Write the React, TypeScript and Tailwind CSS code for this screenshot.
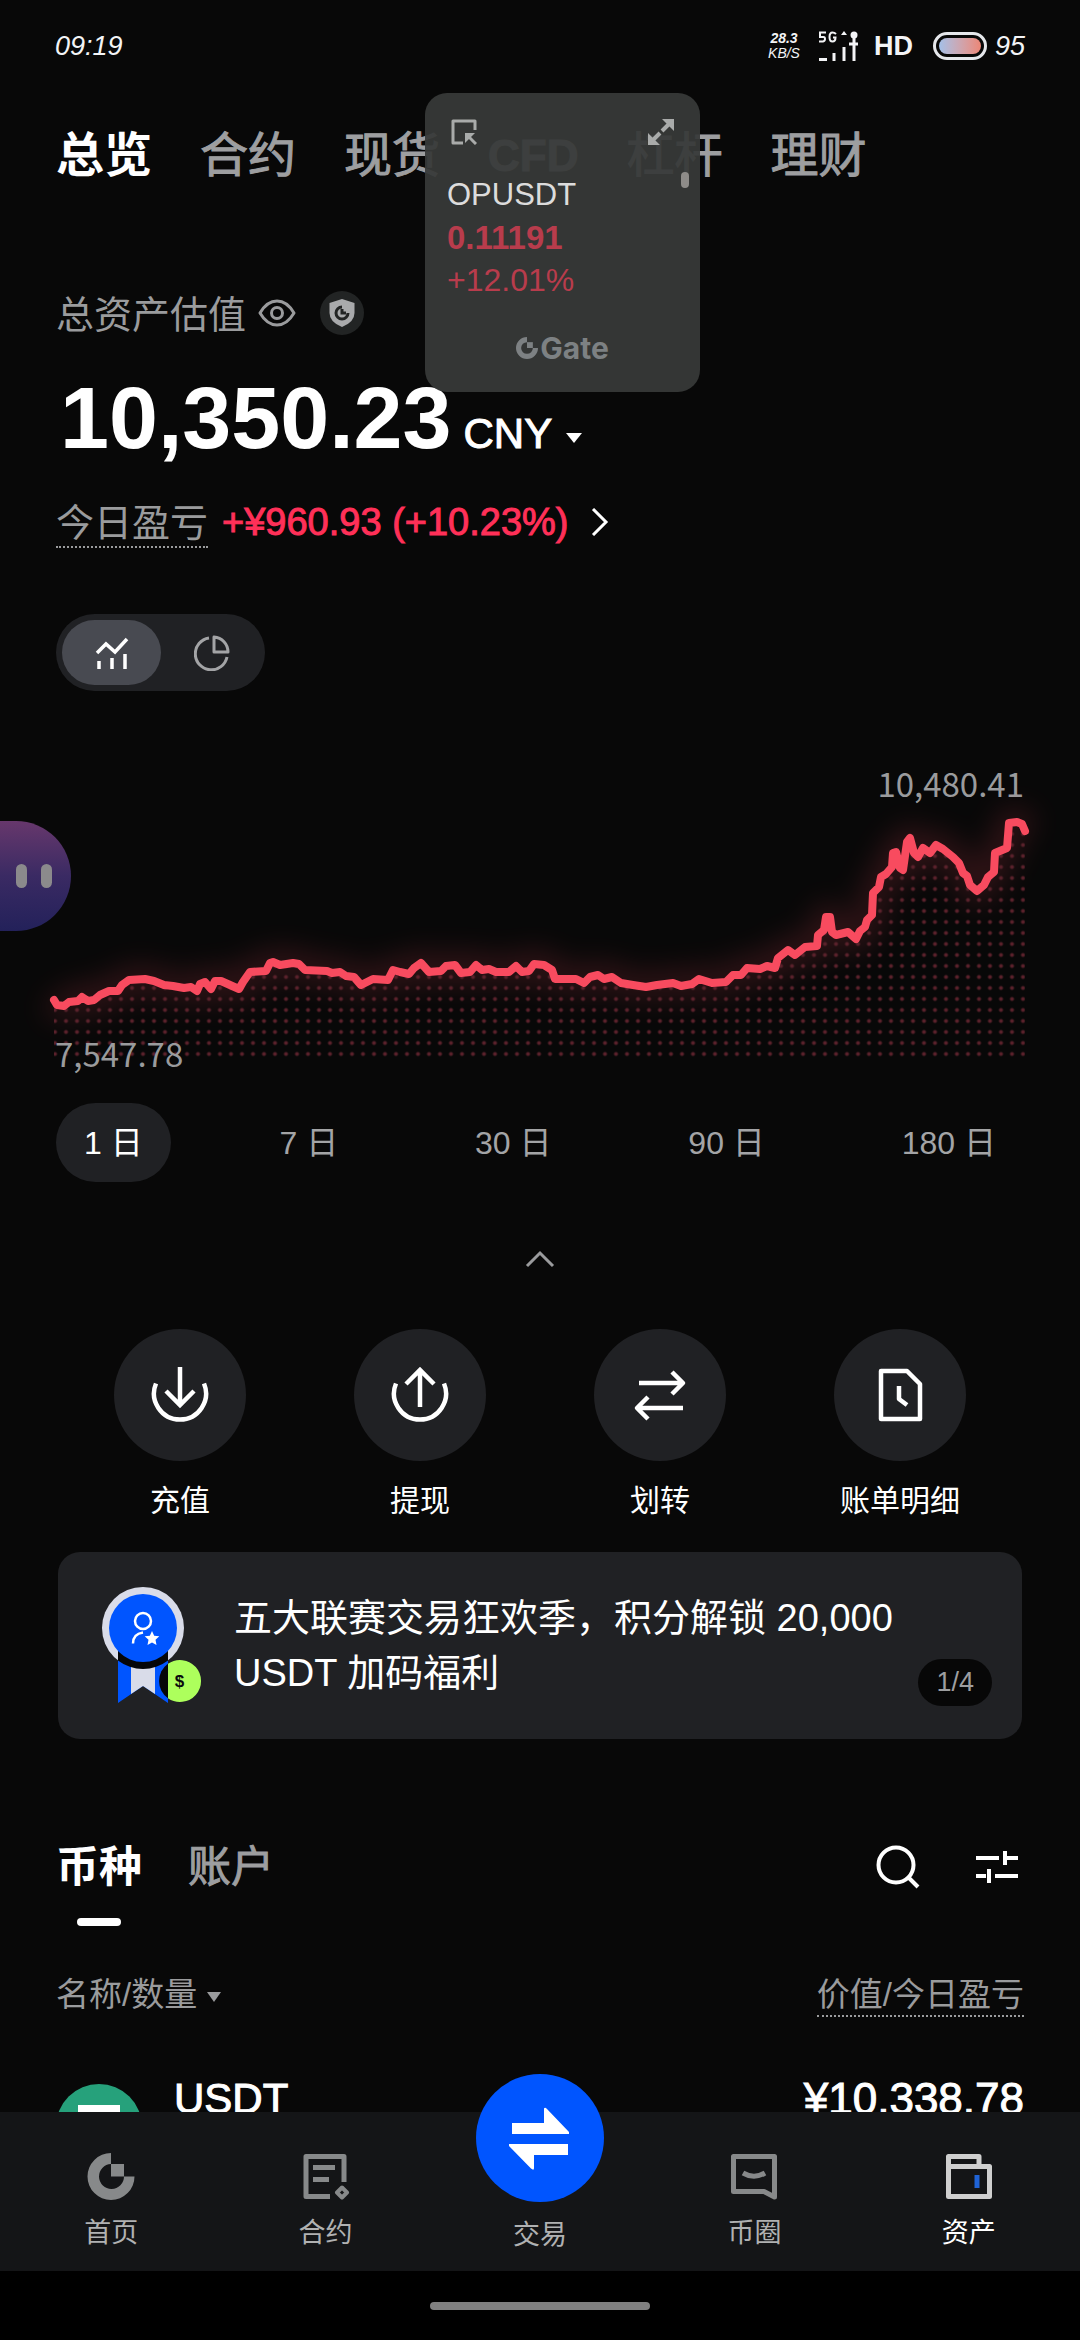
import { useState, type ReactNode } from 'react';

const ACCOUNT_TABS = ['总览', '合约', '现货', 'CFD', '杠杆', '理财'];
const RANGES = ['1 日', '7 日', '30 日', '90 日', '180 日'];

// Balance history, in chart units
const POINTS = [
  [54, 1000], [57, 1005], [64, 1006], [69, 1002], [78, 1001], [82, 997], [88, 1001], [94, 1000], [100, 995],
  [109, 991], [118, 991], [122, 985], [129, 980], [145, 979], [154, 981], [164, 985], [173, 986], [184, 988],
  [191, 987], [197, 991], [200, 984], [205, 982], [211, 989], [215, 981], [221, 981], [230, 985], [239, 989],
  [243, 982], [250, 972], [266, 971], [270, 963], [273, 962], [280, 965], [293, 963], [299, 964], [305, 970],
  [327, 971], [332, 973], [340, 972], [346, 976], [354, 977], [361, 985], [365, 983], [373, 979], [388, 980],
  [393, 970], [400, 972], [409, 974], [414, 968], [421, 963], [429, 972], [441, 971], [446, 966], [455, 965],
  [461, 973], [470, 972], [476, 965], [482, 970], [489, 969], [496, 972], [509, 972], [516, 966], [522, 972],
  [529, 971], [534, 964], [544, 965], [552, 970], [555, 979], [576, 979], [584, 983], [590, 977], [598, 975],
  [604, 979], [612, 977], [621, 983], [633, 985], [646, 987], [657, 985], [673, 983], [681, 986], [692, 984],
  [699, 979], [712, 983], [726, 982], [733, 975], [741, 975], [747, 968], [760, 969], [767, 966], [775, 968],
  [778, 958], [788, 950], [795, 955], [805, 947], [817, 946], [818, 935], [824, 930], [826, 917], [830, 917],
  [832, 932], [836, 935], [848, 932], [856, 939], [860, 931], [865, 927], [867, 920], [872, 915], [873, 893],
  [879, 887], [881, 877], [886, 874], [892, 867], [893, 853], [896, 852], [900, 868], [903, 870], [907, 842],
  [910, 838], [914, 853], [918, 857], [923, 848], [930, 853], [936, 845], [943, 849], [953, 857], [959, 863],
  [963, 873], [967, 876], [970, 885], [977, 891], [984, 885], [988, 877], [994, 872], [995, 853], [1007, 848],
  [1009, 823], [1017, 822], [1022, 824], [1025, 831],
];
const LINE = 'M' + POINTS.map((p) => p.join(' ')).join(' L');

function GateMark({ className }: { className?: string }) {
  return (
    <svg viewBox="0 0 47 47" className={className} fill="currentColor" aria-hidden="true">
      <path d="M23.5 0A23.5 23.5 0 1 0 47 23.5H36A12.5 12.5 0 1 1 23.5 11Z" />
      <path d="M23.5 11H36V23.5H23.5Z" />
    </svg>
  );
}

function StatusBar() {
  return (
    <div className="flex h-[92px] shrink-0 items-center justify-between px-[55px] text-[27px] leading-none text-gray-100">
      <span className="italic">09:19</span>
      <div className="flex items-center">
        <div className="mr-[18px] flex flex-col items-center text-[14px] italic leading-[15px]">
          <span className="font-bold">28.3</span>
          <span>KB/S</span>
        </div>
        <svg viewBox="0 0 40 30" className="mr-4 h-[30px] w-10" fill="none" stroke="currentColor" strokeWidth="3" aria-hidden="true">
          <path d="M8 1.500H2V6H5.500Q7 6 7 8T5 10.500H1M18 3Q16.500 1.500 14.500 1.500Q11.500 1.500 11.500 6T14.500 10.500Q17.500 10.500 17.500 6.500H15" strokeWidth="2" />
          <path d="M1 28.500H9M16 30V22M26 30V16M36 30V4M31 13H40" />
          <path d="M26 0L29 4H23Z" fill="currentColor" stroke="none" />
          <circle cx="36" cy="4" r="3.500" fill="currentColor" stroke="none" />
        </svg>
        <span className="mr-5 font-bold">HD</span>
        <div className="mr-2 h-[28px] w-[54px] rounded-full border-[3px] border-gray-200 p-[3px]">
          <div className="h-full rounded-full bg-linear-to-r from-[#a3c0e8] to-[#ec8676]" />
        </div>
        <span className="italic">95</span>
      </div>
    </div>
  );
}

function PriceWidget() {
  return (
    <aside className="absolute left-[425px] top-[93px] z-20 flex h-[299px] w-[275px] flex-col rounded-[22px] bg-[#373938]/94 px-[22px] pb-[26px] pt-[26px]">
      <div className="flex justify-between px-1 text-[#a9abaa]">
        <button type="button" aria-label="缩小">
          <svg viewBox="0 0 26 26" className="size-[26px]" fill="none" stroke="currentColor" strokeWidth="3" aria-hidden="true">
            <path d="M12 24H2V2H24V11" strokeLinejoin="round" />
            <path d="M25 25L17 17" />
            <path d="M14 14H24L14 24Z" fill="currentColor" stroke="none" />
          </svg>
        </button>
        <button type="button" aria-label="展开">
          <svg viewBox="0 0 26 26" className="size-[26px]" fill="none" stroke="currentColor" strokeWidth="4" aria-hidden="true">
            <path d="M14 12L22 4M4 22L12 14" />
            <path d="M14 0H26V12ZM0 14V26H12Z" fill="currentColor" stroke="none" />
          </svg>
        </button>
      </div>
      <span className="absolute right-[11px] top-[79px] h-4 w-2 rounded-full bg-[#8e8c89]" />
      <div className="mt-7 flex flex-col text-[32px] leading-[43px]">
        <span className="text-[31px] text-[#dcdcdc]">OPUSDT</span>
        <span className="text-[33px] font-bold text-[#b83c4c]">0.11191</span>
        <span className="text-[#b83c4c]">+12.01%</span>
      </div>
      <div className="mt-auto flex items-center justify-center gap-[2px] text-[#7d8183]">
        <GateMark className="size-[22px]" />
        <span className="font-[Inter,sans-serif] text-[30px] font-bold leading-9">Gate</span>
      </div>
    </aside>
  );
}

function AssetChart() {
  return (
    <figure className="relative">
      <figcaption className="px-14 pb-[6px] text-right font-['Noto_Sans_CJK_SC',sans-serif] text-[33px] leading-[34px] text-[#9a9b9d]">
        10,480.41
      </figcaption>
      <svg viewBox="0 806 1080 260" className="block w-full overflow-visible" aria-hidden="true">
        <defs>
          <pattern id="dots" x="49.500" y="971.500" width="11" height="11" patternUnits="userSpaceOnUse">
            <circle cx="5.500" cy="5.500" r="2" fill="#5a212b" />
          </pattern>
          <filter id="glow" x="-10%" y="-50%" width="120%" height="200%">
            <feGaussianBlur stdDeviation="14" />
          </filter>
        </defs>
        <path d={LINE} fill="none" stroke="#f84b5f" strokeWidth="26" strokeLinejoin="round" opacity="0.17" filter="url(#glow)" />
        <path d={`${LINE} V1058 H54 Z`} fill="url(#dots)" />
        <path d={LINE} fill="none" stroke="#f84b5f" strokeWidth="8" strokeLinecap="round" strokeLinejoin="round" />
      </svg>
      <span className="absolute -bottom-1 left-[55px] font-['Noto_Sans_CJK_SC',sans-serif] text-[33px] leading-[34px] text-[#9a9b9d]">
        7,547.78
      </span>
    </figure>
  );
}

function ActionIcon({ children }: { children: ReactNode }) {
  return (
    <span className="flex size-[132px] items-center justify-center rounded-full bg-[#202124]">
      <svg viewBox="0 0 60 60" className="size-[60px]" fill="none" stroke="currentColor" strokeWidth="4.500" strokeLinejoin="round" aria-hidden="true">
        {children}
      </svg>
    </span>
  );
}

const ACTIONS = [
  { label: '充值', icon: <path d="M6 18.500A26 26 0 1 0 54 18.500M30 2V40M16 26L30 40L44 26" strokeLinejoin="miter" /> },
  { label: '提现', icon: <path d="M6 18.500A26 26 0 1 0 54 18.500M30 42V5M16 19L30 5L44 19" strokeLinejoin="miter" /> },
  { label: '划转', icon: <path d="M9 18H52M42 7L53 18L42 29M53 43H8M18 32L7 43L18 54" /> },
  {
    label: '账单明细',
    icon: (
      <>
        <path d="M11 6H37L50 19V54H11Z" />
        <path d="M29 21V34L37 40" />
      </>
    ),
  },
];

function Medal() {
  return (
    <svg viewBox="0 0 100 118" className="h-[118px] w-[100px] shrink-0" aria-hidden="true">
      <circle cx="41" cy="41" r="41" fill="#d9dce9" />
      <path d="M16 62H66V116L41 99L16 116Z" fill="#0055ff" />
      <path d="M29 62H53V107L41 99L29 107Z" fill="#d9dce9" />
      <path d="M16 62H66V73.500A41 41 0 0 1 16 73.500Z" fill="#050608" />
      <circle cx="41" cy="41" r="34" fill="#0055ff" />
      <path d="M66 76.800A21 21 0 0 0 66 111.200Z" fill="#050608" />
      <path d="M66 76.800A21 21 0 1 1 66 111.200Z" fill="#adff5c" />
      <g fill="none" stroke="#fff" strokeWidth="2.500">
        <circle cx="41" cy="34" r="8" />
        <path d="M31 56.500Q31 47 41 45.500" />
      </g>
      <path d="M50 44L52.200 48.700L57.300 49.300L53.500 52.800L54.500 57.900L50 55.400L45.500 57.900L46.500 52.800L42.700 49.300L47.800 48.700Z" fill="#fff" />
      <text x="77.500" y="100" textAnchor="middle" fontSize="17" fontWeight="700" fontFamily="Liberation Sans, sans-serif" fill="#0a0b0d">
        $
      </text>
    </svg>
  );
}

function NavItem({ label, active, children }: { label: string; active?: boolean; children: ReactNode }) {
  return (
    <a href="#" className="relative flex flex-1 flex-col items-center pt-10 text-[#87898a]">
      <svg viewBox="0 0 48 48" className="size-12" fill="none" stroke="currentColor" strokeWidth="5" strokeLinejoin="round" aria-hidden="true">
        {children}
      </svg>
      <span className={`mt-3 text-[27px] leading-[42px] ${active ? 'text-white' : 'text-[#b0b1b2]'}`}>{label}</span>
    </a>
  );
}

function BottomNav() {
  return (
    <nav className="relative z-10 flex h-[159px] shrink-0 bg-[#141517] px-1">
      <NavItem label="首页">
        <g fill="currentColor" stroke="none">
          <path d="M24 1A23.500 23.500 0 1 0 47.500 24.500H37A12.500 12.500 0 1 1 24 12Z" />
          <path d="M24 12H37V24.500H24Z" />
        </g>
      </NavItem>
      <NavItem label="合约">
        <path d="M28 44.500H4V4.500H42V30M11 15.500H33M11 27.500H27" />
        <path d="M40 35.500L45 40.500L40 45.500L35 40.500Z" strokeWidth="4" />
      </NavItem>
      <a href="#" className="relative flex flex-1 flex-col items-center">
        <span className="-mt-[38px] flex size-32 items-center justify-center rounded-full bg-[#0055ff]">
          <svg viewBox="0 0 128 128" className="size-32" fill="#fff" aria-hidden="true">
            <path d="M36 49H68V34.500Q69 33 71 35L93 58V60H36Z" />
            <path d="M92 70H33V72L55 94.500Q58 97 58 94V81H92Z" />
          </svg>
        </span>
        <span className="mt-3 text-[27px] leading-[42px] text-[#b0b1b2]">交易</span>
      </a>
      <NavItem label="币圈">
        <path d="M3.500 4.500H44.500V45L34 39.500H3.500Z" />
        <path d="M13 21Q24 27.500 35 21" />
      </NavItem>
      <NavItem label="资产" active>
        <g stroke="#cfcfcf">
          <path d="M3.500 14.500V4.500H34V14.500M3.500 14.500H44.500V44.500H3.500Z" />
        </g>
        <path d="M32 23V36" stroke="#1f63d6" />
      </NavItem>
    </nav>
  );
}

export default function App() {
  const [accountTab, setAccountTab] = useState('总览');
  const [range, setRange] = useState('1 日');
  const [listTab, setListTab] = useState('币种');

  return (
    <div className="relative flex h-screen flex-col overflow-hidden bg-[#080808] font-['Liberation_Sans','Noto_Sans_CJK_SC',sans-serif] text-white">
      <StatusBar />
      <PriceWidget />

      {/* Assistant handle */}
      <button
        type="button"
        aria-label="助手"
        className="absolute left-0 top-[821px] z-10 flex h-[110px] w-[71px] items-center justify-end gap-[14px] rounded-r-full bg-linear-to-b from-[#67376c] via-[#3a2a63] to-[#23215a] pr-[19px]"
      >
        <span className="h-6 w-[11px] rounded-full bg-[#8b8a8c]" />
        <span className="h-6 w-[11px] rounded-full bg-[#8b8a8c]" />
      </button>

      <main className="min-h-0 flex-1 overflow-y-auto [scrollbar-width:none]">
        <div className="mt-7 flex h-[72px] items-center gap-12 px-14 text-5xl">
          {ACCOUNT_TABS.map((tab) => (
            <button
              key={tab}
              type="button"
              onClick={() => setAccountTab(tab)}
              className={`leading-[72px] ${tab === accountTab ? 'font-bold text-white' : 'text-[#9d9ea0] [-webkit-text-stroke:1px]'} ${tab === 'CFD' ? 'text-[44px] font-bold' : ''}`}
            >
              {tab}
            </button>
          ))}
        </div>

        <section className="px-14 pt-[99px]">
          <div className="flex h-11 items-center text-[38px] text-[#9a9b9d]">
            <span className="pt-1">总资产估值</span>
            <button type="button" aria-label="隐藏资产" className="ml-3">
              <svg viewBox="0 0 38 28" className="h-7 w-[38px]" fill="none" stroke="currentColor" strokeWidth="3" aria-hidden="true">
                <path d="M2 14Q9 2 19 2T36 14Q29 26 19 26T2 14Z" strokeLinejoin="round" />
                <circle cx="19" cy="14" r="5.500" />
              </svg>
            </button>
            <button type="button" aria-label="安全保障" className="ml-6 flex size-11 items-center justify-center rounded-full bg-[#222424]">
              <svg viewBox="0 0 26 28" className="h-7 w-[26px]" aria-hidden="true">
                <path d="M13 0L25.500 4V14Q25.500 23 13 28Q.5 23 .5 14V4Z" fill="#a9aaac" />
                <path d="M13 8A6 6 0 1 0 19 14M13 10V14H17" fill="none" stroke="#222424" strokeWidth="3" />
              </svg>
            </button>
          </div>

          <div className="mt-[39px] flex items-baseline pl-1">
            <span className="text-[88px] font-bold leading-[88px]">10,350.23</span>
            <button type="button" className="ml-3 flex items-center gap-[14px] text-[42px] leading-[48px] [-webkit-text-stroke:1px]">
              CNY
              <svg viewBox="0 0 16 10" className="mt-2 h-[10px] w-4" fill="currentColor" aria-hidden="true">
                <path d="M0 0H16L8 10Z" />
              </svg>
            </button>
          </div>

          <a href="#" className="mt-[34px] flex h-[52px] items-center text-[38px]">
            <span className="border-b-2 border-dotted border-[#9a9b9d] pt-1 leading-[46px] text-[#9a9b9d]">今日盈亏</span>
            <span className="ml-[14px] leading-[50px] text-[#ff3058] [-webkit-text-stroke:1px]">+¥960.93 (+10.23%)</span>
            <svg viewBox="0 0 18 28" className="ml-[22px] h-7 w-[18px]" fill="none" stroke="currentColor" strokeWidth="3" aria-hidden="true">
              <path d="M2 1L15 14L2 27" />
            </svg>
          </a>

          <div className="mt-[66px] flex h-[77px] w-[209px] gap-1 rounded-full bg-[#202124] p-[6px]">
            <button type="button" aria-label="走势" className="flex w-[99px] items-center justify-center rounded-full bg-[#484a51]">
              <svg viewBox="0 0 34 34" className="size-[34px]" fill="none" stroke="currentColor" strokeWidth="3.500" aria-hidden="true">
                <path d="M2 17L11 8L20 16L32 3M4 33V25M17 33V22M30 33V18" />
              </svg>
            </button>
            <button type="button" aria-label="分布" className="flex flex-1 items-center justify-center text-[#a3a4a6]">
              <svg viewBox="0 0 36 36" className="size-9" fill="none" stroke="currentColor" strokeWidth="3" strokeLinejoin="round" aria-hidden="true">
                <path d="M15 3A16 16 0 1 0 33 22" />
                <path d="M20 2V17H34A15 15 0 0 0 20 2Z" />
              </svg>
            </button>
          </div>
        </section>

        <section className="pt-[75px]">
          <AssetChart />
          <div className="mt-[37px] flex justify-between px-14 text-[32px]">
            {RANGES.map((r) => (
              <button
                key={r}
                type="button"
                onClick={() => setRange(r)}
                className={`h-[79px] rounded-full px-7 ${r === range ? 'bg-[#202124] text-white' : 'text-[#a3a4a6]'}`}
              >
                {r}
              </button>
            ))}
          </div>
          <button type="button" aria-label="收起" className="mx-auto mt-[57px] flex h-10 w-20 items-center justify-center text-[#9a9b9d]">
            <svg viewBox="0 0 30 18" className="h-[18px] w-[30px]" fill="none" stroke="currentColor" strokeWidth="3" aria-hidden="true">
              <path d="M2 16L15 3L28 16" />
            </svg>
          </button>
        </section>

        <div className="mt-[50px] flex px-[60px]">
          {ACTIONS.map((action) => (
            <button key={action.label} type="button" className="flex flex-1 flex-col items-center gap-5">
              <ActionIcon>{action.icon}</ActionIcon>
              <span className="text-3xl leading-10">{action.label}</span>
            </button>
          ))}
        </div>

        <a href="#" className="relative mx-[58px] mt-[31px] flex h-[187px] items-center rounded-[22px] bg-[#202124] pl-11 pr-24">
          <Medal />
          <p className="ml-8 text-[38px] leading-[55px]">五大联赛交易狂欢季，积分解锁 20,000 USDT 加码福利</p>
          <span className="absolute bottom-[33px] right-[30px] rounded-full bg-[#070707] px-[18px] text-[27px] leading-[47px] text-[#9d9ea0]">1/4</span>
        </a>

        <section className="px-14 pt-[100px]">
          <div className="flex items-start justify-between">
            <div className="flex gap-[46px] text-[43px] leading-[56px]">
              {['币种', '账户'].map((tab) => (
                <button key={tab} type="button" onClick={() => setListTab(tab)} className="flex flex-col items-center gap-[23px]">
                  <span className={tab === listTab ? 'font-bold text-white' : 'text-[#9d9ea0] [-webkit-text-stroke:1px]'}>{tab}</span>
                  <span className={`h-2 w-11 rounded-full ${tab === listTab ? 'bg-white' : ''}`} />
                </button>
              ))}
            </div>
            <div className="flex h-[56px] items-center gap-14 pr-[6px]">
              <button type="button" aria-label="搜索">
                <svg viewBox="0 0 44 44" className="size-11" fill="none" stroke="currentColor" strokeWidth="4" aria-hidden="true">
                  <circle cx="20" cy="20" r="17.500" />
                  <path d="M32 32L42 42" />
                </svg>
              </button>
              <button type="button" aria-label="筛选">
                <svg viewBox="0 0 42 34" className="h-[34px] w-[42px]" fill="none" stroke="currentColor" strokeWidth="4" aria-hidden="true">
                  <path d="M0 8H23M29 1V15M29 8H42M0 26H10M13 19V33M19 26H42" />
                </svg>
              </button>
            </div>
          </div>

          <div className="mt-[49px] flex items-start justify-between text-[33px] leading-10 text-[#9a9b9d]">
            <button type="button" className="flex items-center gap-[10px]">
              名称/数量
              <svg viewBox="0 0 14 10" className="mt-1 h-[10px] w-[14px]" fill="currentColor" aria-hidden="true">
                <path d="M0 0H14L7 10Z" />
              </svg>
            </button>
            <span className="border-b-2 border-dotted border-[#9a9b9d]">价值/今日盈亏</span>
          </div>

          <div className="mt-[67px] flex items-start leading-[30px] [-webkit-text-stroke:1px]">
            <svg viewBox="0 0 86 86" className="size-[86px]" aria-hidden="true">
              <circle cx="43" cy="43" r="43" fill="#26a17b" />
              <path d="M22 21H64V34H50V70H36V34H22Z" fill="#fff" />
            </svg>
            <span className="ml-8 text-[42px]">USDT</span>
            <span className="ml-auto text-[44px]">¥10,338.78</span>
          </div>
        </section>
      </main>

      <BottomNav />
      <div className="flex h-[69px] shrink-0 items-center justify-center bg-black">
        <span className="h-2 w-[220px] rounded-full bg-[#808080]" />
      </div>
    </div>
  );
}
